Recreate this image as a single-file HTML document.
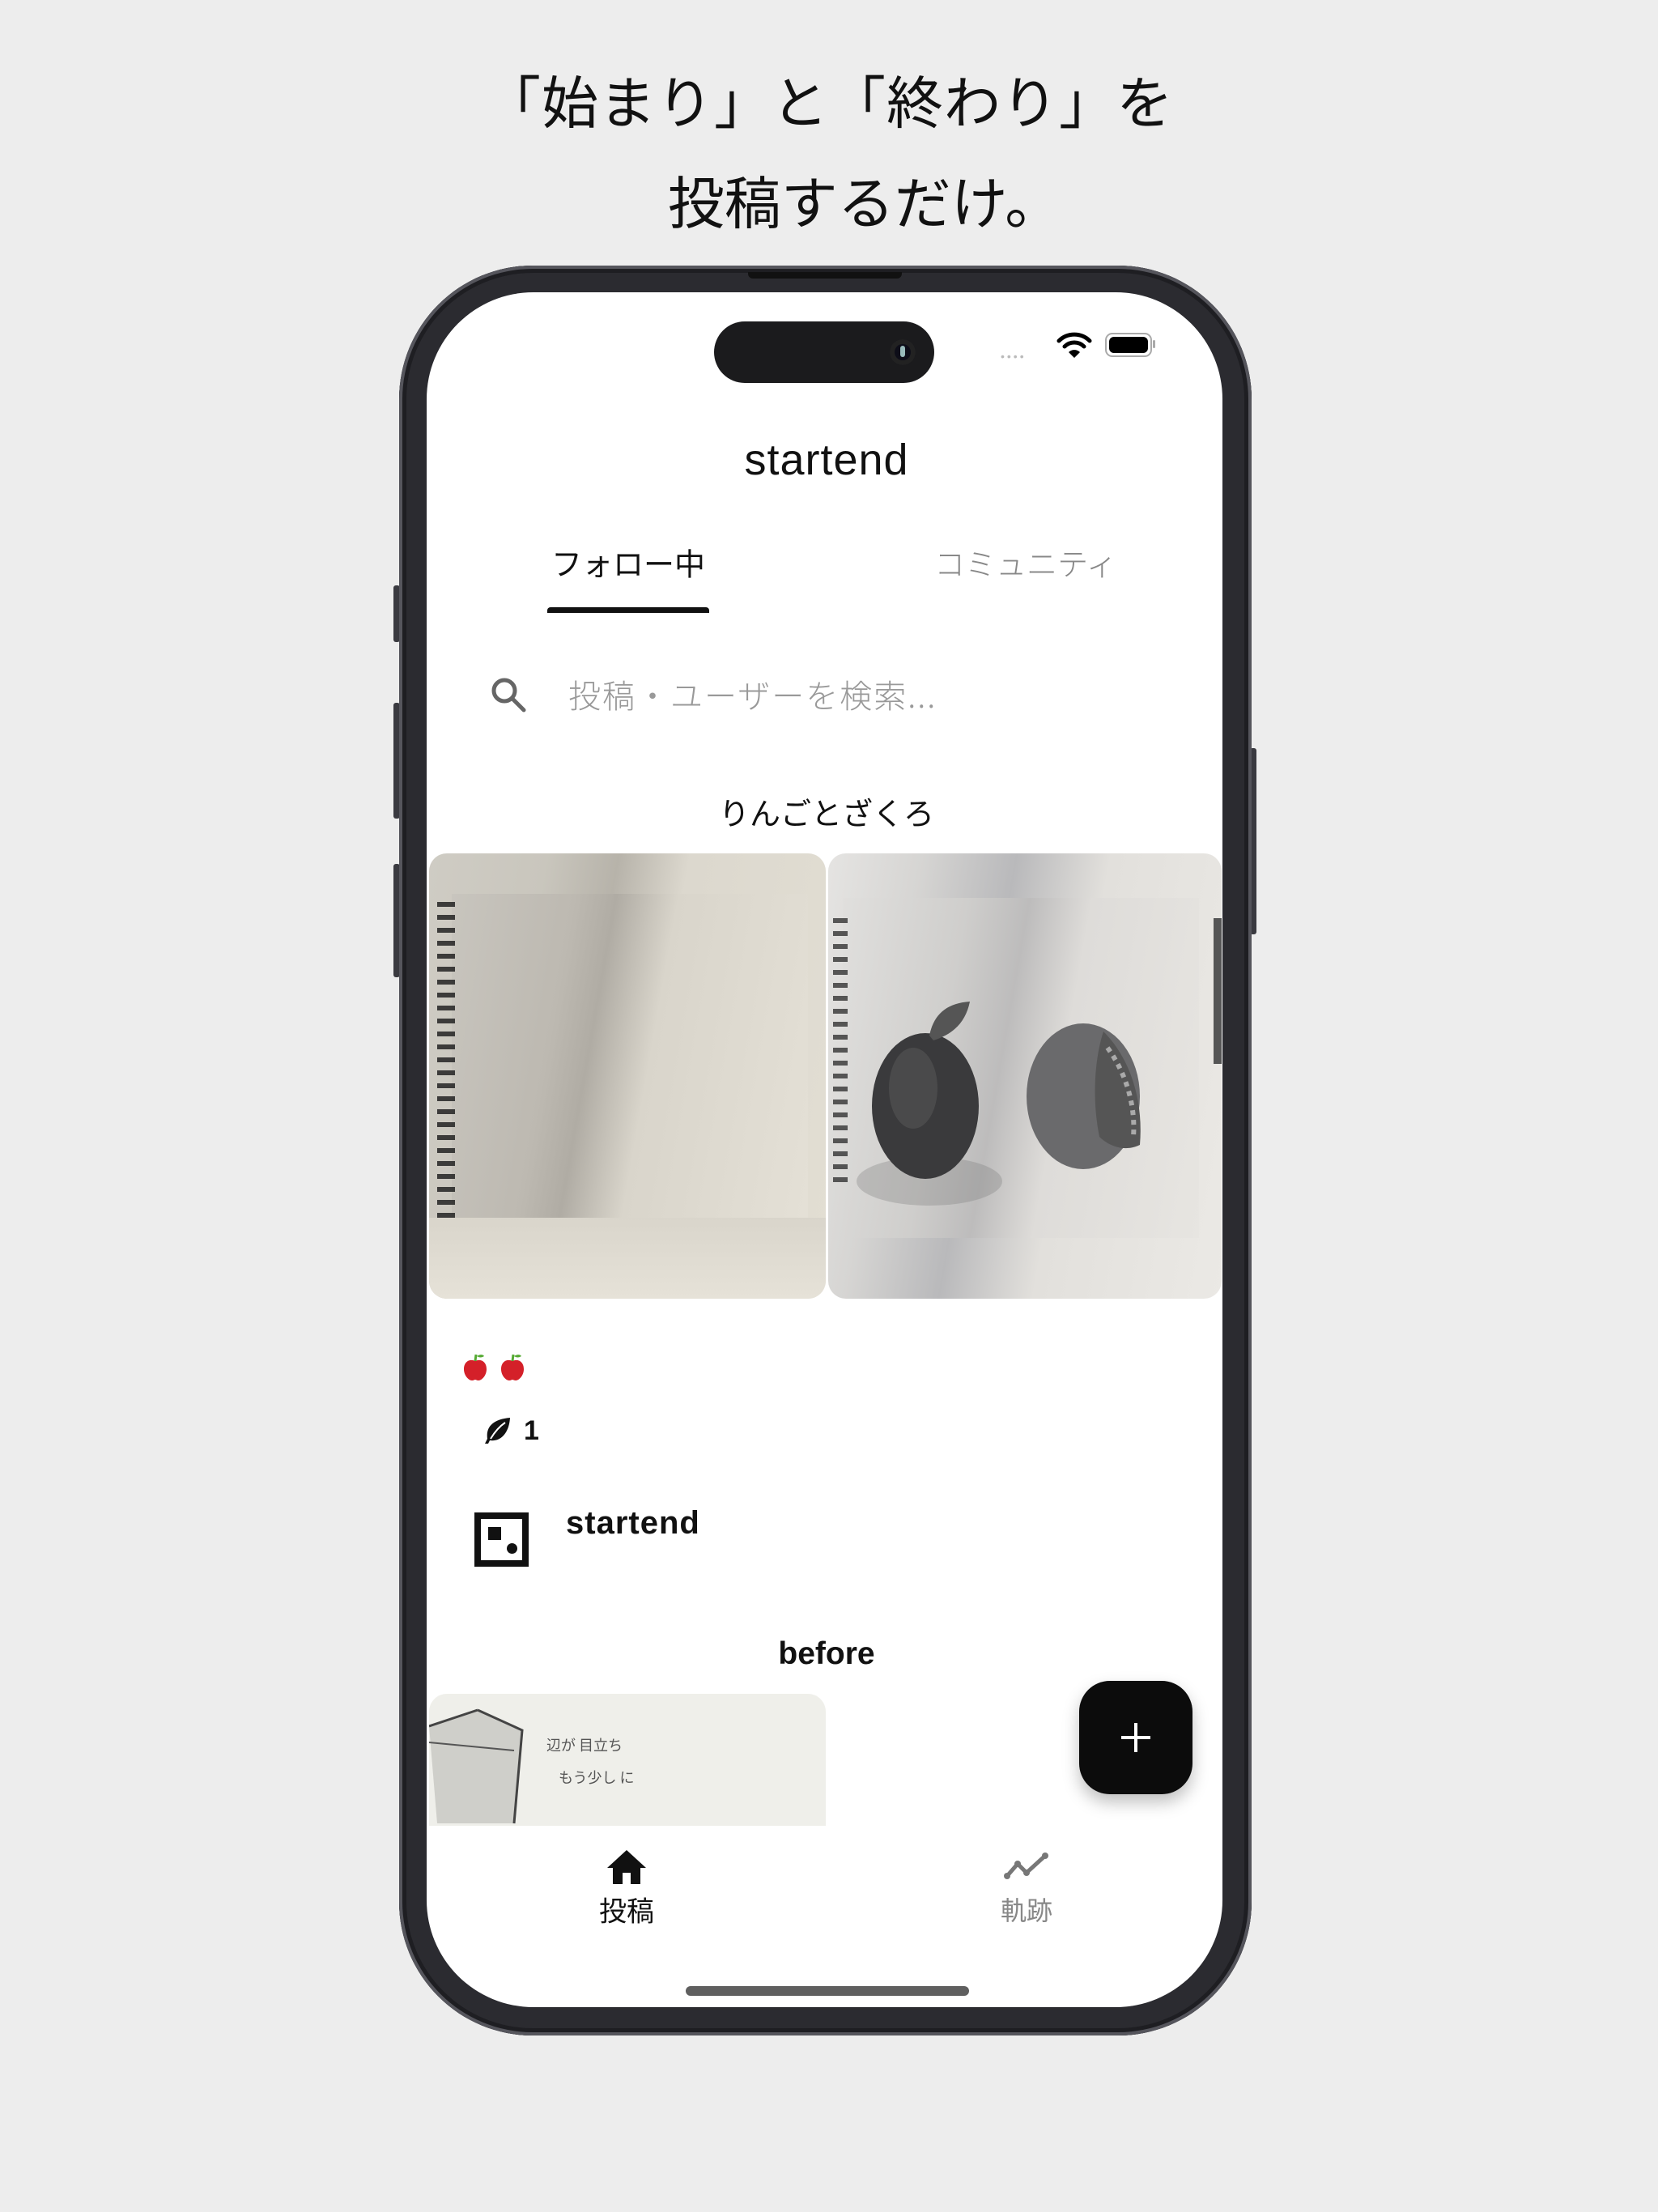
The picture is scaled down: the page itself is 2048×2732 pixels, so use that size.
<!DOCTYPE html>
<html><head><meta charset="utf-8">
<style>
*{margin:0;padding:0;box-sizing:border-box}
html,body{width:2048px;height:2732px;background:#ededed;overflow:hidden;font-family:"Liberation Sans","Noto Sans CJK JP",sans-serif}
.abs{position:absolute}
.hd{position:absolute;left:0;width:2048px;text-align:center;font-size:70px;color:#111;font-family:"Noto Sans CJK JP","Liberation Sans",sans-serif;font-weight:400}
.phone{left:493px;top:328px;width:1053px;height:2186px;border-radius:165px;background:#2b2b30;box-shadow:inset 0 0 0 4px #55555c,inset 0 0 0 9px #1e1e22}
.screen{left:527px;top:361px;width:983px;height:2118px;border-radius:132px;background:#fff;overflow:hidden}
.btn{background:#3a3a40;border-radius:3px}
.jp{font-family:"Noto Sans CJK JP","Liberation Sans",sans-serif}
.c{position:absolute;transform:translate(-50%,-50%);white-space:nowrap}
</style></head><body>
<div class="hd" style="top:78px;line-height:90px;letter-spacing:1px">「始まり」と「終わり」を</div>
<div class="hd" style="top:202px;line-height:90px;left:44px">投稿するだけ。</div>

<div class="abs btn" style="left:486px;top:723px;width:8px;height:70px"></div>
<div class="abs btn" style="left:486px;top:868px;width:8px;height:143px"></div>
<div class="abs btn" style="left:486px;top:1067px;width:8px;height:140px"></div>
<div class="abs btn" style="left:1544px;top:924px;width:8px;height:230px"></div>

<div class="abs phone"></div>
<div class="abs" style="left:924px;top:336px;width:190px;height:8px;background:#111;border-radius:0 0 6px 6px"></div>

<div class="abs screen">
  <div class="abs" style="left:355px;top:36px;width:272px;height:76px;border-radius:38px;background:#1b1b1d"></div>
  <div class="abs" style="left:572px;top:58px;width:32px;height:32px;border-radius:50%;background:#0d0d18;box-shadow:inset 0 0 0 6px #222"></div>
  <div class="abs" style="left:585px;top:66px;width:6px;height:14px;border-radius:3px;background:#9bb"></div>
  <div class="abs" style="left:709px;top:71px;font-size:14px;color:#bbb;letter-spacing:3px">••••</div>
  <svg class="abs" style="left:778px;top:49px" width="44" height="34" viewBox="0 0 44 34"><path d="M3 11a27 27 0 0 1 38 0" stroke="#000" stroke-width="5" fill="none" stroke-linecap="round"/><path d="M10 18a17 17 0 0 1 24 0" stroke="#000" stroke-width="5" fill="none" stroke-linecap="round"/><path d="M22 32l-7-7a10 10 0 0 1 14 0z" fill="#000"/></svg>
  <div class="abs" style="left:838px;top:50px;width:58px;height:30px;border-radius:9px;border:2px solid #aaa;padding:3px"><div style="width:100%;height:100%;background:#000;border-radius:6px"></div></div>
  <div class="abs" style="left:897px;top:59px;width:3px;height:10px;background:#aaa;border-radius:2px"></div>

  <div class="c" style="left:494px;top:207px;font-size:54px;color:#111;letter-spacing:1px;font-weight:300">startend</div>
  <div class="c jp" style="left:249px;top:333px;font-size:38px;color:#111">フォロー中</div>
  <div class="c jp" style="left:740px;top:333px;font-size:38px;color:#888;font-weight:300">コミュニティ</div>
  <div class="abs" style="left:149px;top:389px;width:200px;height:7px;background:#111;border-radius:4px 4px 0 0"></div>

  <svg class="abs" style="left:78px;top:474px" width="46" height="46" viewBox="0 0 46 46"><circle cx="18" cy="18" r="13" stroke="#666" stroke-width="5" fill="none"/><path d="M28 28l14 14" stroke="#666" stroke-width="5" stroke-linecap="round"/></svg>
  <div class="abs jp" style="left:175px;top:472px;font-size:40px;line-height:48px;color:#999;font-weight:300;letter-spacing:2px">投稿・ユーザーを検索...</div>

  <div class="c jp" style="left:494px;top:641px;font-size:38px;color:#111">りんごとざくろ</div>

  <div class="abs" style="left:3px;top:693px;width:490px;height:550px;border-radius:22px;overflow:hidden;background:linear-gradient(100deg,#cfccc4 0%,#c9c6bd 25%,#b7b3aa 40%,#dcd8ce 55%,#e2ded3 100%)">
    <div class="abs" style="left:28px;top:50px;width:440px;height:400px;background:linear-gradient(100deg,#c8c5be 0%,#bdb9b1 30%,#b0aca4 40%,#d9d5cb 55%,#e4e0d6 100%)"></div>
    <div class="abs" style="left:10px;top:60px;width:22px;height:400px;background:repeating-linear-gradient(180deg,#222 0 6px,transparent 6px 16px);opacity:.85"></div>
    <div class="abs" style="left:0;top:450px;width:490px;height:100px;background:linear-gradient(180deg,#d9d5cb,#e6e2d8)"></div>
  </div>
  <div class="abs" style="left:496px;top:693px;width:486px;height:550px;border-radius:22px;overflow:hidden;background:linear-gradient(100deg,#e5e4e2 0%,#d6d5d3 20%,#b9b9bb 40%,#e2e0dc 60%,#ebe9e5 100%)">
    <div class="abs" style="left:18px;top:55px;width:440px;height:420px;background:linear-gradient(100deg,#e0dfdd 0%,#cfcecc 30%,#bdbcbc 45%,#dedcd9 60%,#e7e5e1 100%)"></div>
    <div class="abs" style="left:6px;top:80px;width:18px;height:330px;background:repeating-linear-gradient(180deg,#333 0 6px,transparent 6px 16px);opacity:.8"></div>
    <svg class="abs" style="left:0;top:0" width="486" height="550" viewBox="0 0 486 550">
      <ellipse cx="125" cy="405" rx="90" ry="30" fill="#777" opacity=".3"/>
      <ellipse cx="120" cy="312" rx="66" ry="90" fill="#3a3a3c"/>
      <ellipse cx="105" cy="290" rx="30" ry="50" fill="#555" opacity=".6"/>
      <path d="M125 225c5-25 20-40 50-42-5 25-20 40-45 48z" fill="#555"/>
      <ellipse cx="315" cy="300" rx="70" ry="90" fill="#6a6a6c"/>
      <path d="M340 220c30 30 50 80 45 140-20 10-40 0-50-10-10-50-5-100 5-130z" fill="#555"/>
      <path d="M345 240c22 30 35 70 32 110" stroke="#aaa" stroke-width="6" fill="none" stroke-dasharray="6 6"/>
      <rect x="476" y="80" width="10" height="180" fill="#555"/>
    </svg>
  </div>

  <svg class="abs" style="left:44px;top:1308px" width="90" height="40" viewBox="0 0 90 40"><g><path d="M16 12c-6-3-14 0-14 10 0 8 6 14 10 14 2 0 3-1 4-1s2 1 4 1c4 0 10-6 10-14 0-10-8-13-14-10z" fill="#d42029"/><path d="M16 12l1-8" stroke="#5a3" stroke-width="3"/><path d="M18 6c4-3 8-2 9 0-3 2-6 2-9 0z" fill="#5a3"/></g><g transform="translate(46 0)"><path d="M16 12c-6-3-14 0-14 10 0 8 6 14 10 14 2 0 3-1 4-1s2 1 4 1c4 0 10-6 10-14 0-10-8-13-14-10z" fill="#d42029"/><path d="M16 12l1-8" stroke="#5a3" stroke-width="3"/><path d="M18 6c4-3 8-2 9 0-3 2-6 2-9 0z" fill="#5a3"/></g></svg>
  <svg class="abs" style="left:71px;top:1388px" width="34" height="36" viewBox="0 0 34 36"><path d="M32 2C10 4 2 14 4 28l-3 6 4 0 2-4c14 2 24-10 25-28z" fill="#111"/><path d="M8 28C14 18 20 12 26 8" stroke="#fff" stroke-width="2" fill="none"/></svg>
  <div class="abs" style="left:120px;top:1386px;font-size:34px;font-weight:700;color:#111;line-height:40px">1</div>

  <div class="abs" style="left:59px;top:1507px;width:67px;height:67px;border:8px solid #111"></div>
  <div class="abs" style="left:76px;top:1525px;width:16px;height:16px;background:#111"></div>
  <div class="abs" style="left:99px;top:1545px;width:13px;height:13px;border-radius:50%;background:#111"></div>
  <div class="abs" style="left:172px;top:1497px;font-size:40px;font-weight:700;color:#111;line-height:46px;letter-spacing:1px">startend</div>

  <div class="c" style="left:494px;top:1682px;font-size:39px;font-weight:700;color:#111">before</div>

  <div class="abs" style="left:3px;top:1731px;width:490px;height:163px;border-radius:22px 22px 0 0;overflow:hidden;background:#efefea">
    <svg width="490" height="163" viewBox="0 0 490 163"><path d="M0 40l60-20 55 25-10 115H10z" fill="#cfcfca"/><path d="M60 20l55 25-10 115" stroke="#444" stroke-width="3" fill="none"/><path d="M0 40l60-20" stroke="#444" stroke-width="3"/><path d="M0 60l105 10" stroke="#555" stroke-width="2"/><text x="145" y="70" font-size="18" fill="#555" font-family="Noto Sans CJK JP">辺が 目立ち</text><text x="160" y="110" font-size="18" fill="#555" font-family="Noto Sans CJK JP">もう少し に</text></svg>
  </div>

  <div class="abs" style="left:806px;top:1715px;width:140px;height:140px;border-radius:38px;background:#0c0c0c;box-shadow:0 10px 20px rgba(0,0,0,.25)"></div>
  <div class="abs" style="left:858px;top:1783px;width:36px;height:4px;background:#fff"></div>
  <div class="abs" style="left:874px;top:1767px;width:4px;height:36px;background:#fff"></div>

  <svg class="abs" style="left:222px;top:1922px" width="50" height="46" viewBox="0 0 50 46"><path d="M25 2L1 24h7v20h12V30h10v14h12V24h7z" fill="#111"/></svg>
  <div class="c jp" style="left:247px;top:1997px;font-size:34px;color:#111">投稿</div>
  <svg class="abs" style="left:712px;top:1925px" width="58" height="36" viewBox="0 0 58 36"><path d="M5 31L18 16l11 11L52 6" stroke="#777" stroke-width="5" fill="none" stroke-linejoin="round"/><circle cx="5" cy="31" r="4" fill="#777"/><circle cx="18" cy="16" r="4" fill="#777"/><circle cx="29" cy="27" r="4" fill="#777"/><circle cx="52" cy="6" r="4" fill="#777"/></svg>
  <div class="c jp" style="left:741px;top:1997px;font-size:32px;color:#888">軌跡</div>

  <div class="abs" style="left:320px;top:2092px;width:350px;height:12px;border-radius:6px;background:#5f5f5f"></div>
</div>
</body></html>
